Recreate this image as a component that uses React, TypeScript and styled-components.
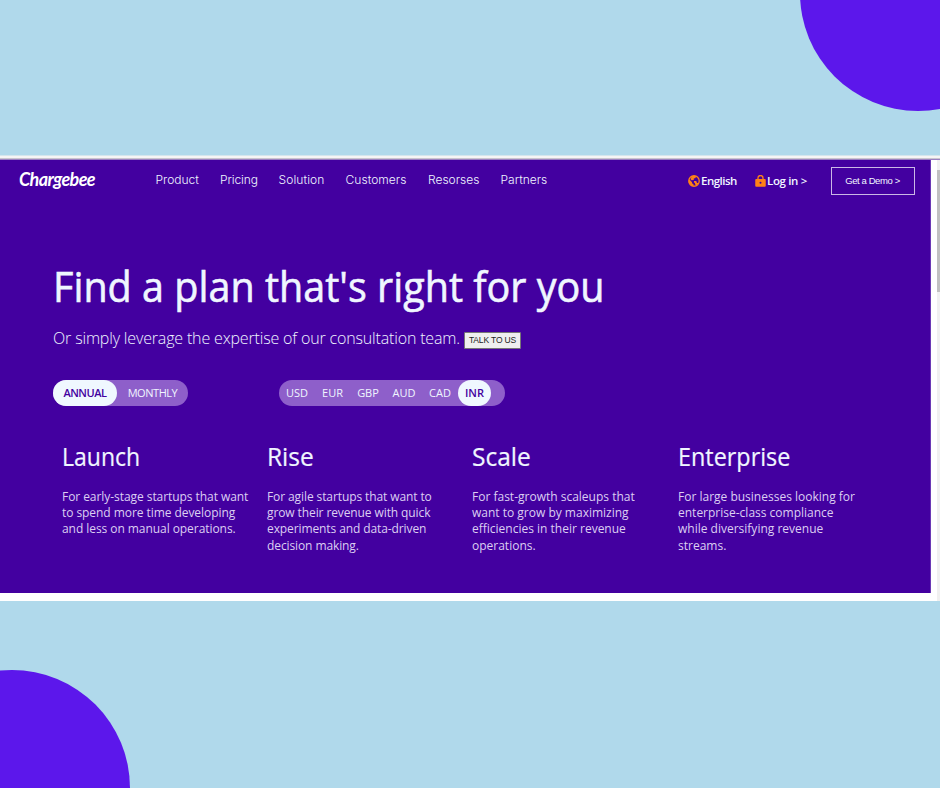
import React from "react";
import styled, { createGlobalStyle } from "styled-components";

const Global = createGlobalStyle`
  * { box-sizing: border-box; }
  body { margin: 0; font-family: "Open Sans", "Noto Sans", sans-serif; }
`;

const Stage = styled.div`
  position: relative;
  width: 940px;
  height: 788px;
  padding-top: 155px;
  overflow: hidden;
  background: #b0d9eb;
`;

const Disc = styled.div<{ $x: number; $y: number }>`
  position: absolute;
  left: ${(p) => p.$x}px;
  top: ${(p) => p.$y}px;
  width: 236px;
  height: 236px;
  border-radius: 50%;
  background: #5c17eb;
`;

const Browser = styled.div`
  height: 445.5px;
  display: flex;
  flex-direction: column;
  background: #fff;
`;

const TopEdge = styled.div`
  height: 5px;
  flex: none;
  background: linear-gradient(#d4e6ee 0 1px, #f5f5f5 1px 3px, #c9c5cf 3px 4px, #9a80c2 4px 5px);
`;

const Viewport = styled.div`
  flex: 1;
  display: flex;
`;

const Page = styled.div`
  width: 931px;
  height: 433px;
  background: #4300a0;
  border-right: 1px solid #6a38b4;
  color: #f0f6ff;
`;

const Track = styled.div`
  width: 3px;
  margin-left: auto;
  padding-top: 10px;
  background: #f0f0f0;
`;

const Thumb = styled.div`
  height: 122px;
  background: #c1c1c1;
`;

const Header = styled.header`
  height: 42px;
  display: flex;
  align-items: center;
  padding-left: 19px;
`;

const Logo = styled.a`
  width: 136.5px;
  font: italic 700 18px/20px Lato, sans-serif;
  letter-spacing: -0.6px;
  padding-bottom: 5px;
  color: #fff;
`;

const Nav = styled.nav`
  width: 532px;
  display: flex;
  gap: 21.5px;
  padding-bottom: 3px;
`;

const NavLink = styled.a<{ $w: number; $ls: number }>`
  width: ${(p) => p.$w}px;
  white-space: nowrap;
  font: 300 12px/16px Inter, sans-serif;
  letter-spacing: ${(p) => p.$ls}px;
`;

const Tool = styled.a<{ $w: number; $ls: number }>`
  width: ${(p) => p.$w}px;
  display: flex;
  align-items: center;
  gap: 1.5px;
  white-space: nowrap;
  font-size: 11.5px;
  line-height: 16px;
  font-weight: 600;
  letter-spacing: ${(p) => p.$ls}px;
  svg { flex: none; }
`;

const Demo = styled.a`
  width: 84px;
  height: 28px;
  margin-bottom: 1px;
  display: flex;
  align-items: center;
  justify-content: center;
  border: 1px solid #cbb8e6;
  white-space: nowrap;
  font: 400 9.5px/12px "Liberation Sans", sans-serif;
  letter-spacing: -0.4px;
`;

const Hero = styled.section`
  padding: 56px 0 0 53px;
`;

const Title = styled.h1`
  margin: 0;
  font-size: 42.5px;
  line-height: 56px;
  font-weight: 400;
  white-space: nowrap;
  -webkit-text-stroke: 0.6px #f0f6ff;
  transform: scaleX(0.93);
  transform-origin: left;
`;

const Lead = styled.div`
  height: 24px;
  margin-top: 12px;
  display: flex;
  align-items: center;
`;

const LeadText = styled.p`
  width: 411px;
  margin: 0;
  font-size: 16px;
  line-height: 24px;
  font-weight: 300;
  letter-spacing: -0.16px;
  white-space: nowrap;
`;

const Talk = styled.button`
  width: 57px;
  height: 17px;
  margin-top: 4px;
  padding: 0;
  border: 1px solid #777;
  border-radius: 1px;
  background: #efefef;
  color: #222;
  white-space: nowrap;
  font: 400 8.5px/14px "Liberation Sans", sans-serif;
  letter-spacing: -0.15px;
`;

const Switches = styled.div`
  display: flex;
  margin-top: 30px;
  gap: 91px;
`;

const Pill = styled.div<{ $w: number }>`
  width: ${(p) => p.$w}px;
  height: 25.5px;
  display: flex;
  border-radius: 13px;
  background: #8e5fca;
`;

const Option = styled.span<{ $w: number; $on?: boolean }>`
  width: ${(p) => p.$w}px;
  display: flex;
  align-items: center;
  justify-content: center;
  border-radius: 13px;
  background: ${(p) => (p.$on ? "#f0f8ff" : "transparent")};
  color: ${(p) => (p.$on ? "#4300a0" : "#f0f6ff")};
  font-size: 11px;
  line-height: 15px;
  font-weight: ${(p) => (p.$on ? 600 : 500)};
  letter-spacing: ${(p) => (p.$w > 60 ? -0.45 : 0)}px;
  padding-bottom: 1.5px;
`;

const Plans = styled.section`
  display: grid;
  grid-template-columns: 205px 205px 206px 210px;
  padding: 32px 0 0 9px;
`;

const PlanName = styled.h2<{ $sx: number }>`
  margin: 0 0 15.5px;
  font-size: 25px;
  line-height: 36px;
  font-weight: 400;
  -webkit-text-stroke: 0.2px #f0f6ff;
  transform: scaleX(${(p) => p.$sx});
  transform-origin: left;
`;

const PlanText = styled.p<{ $ls: number }>`
  margin: 0;
  font-size: 12px;
  line-height: 16.2px;
  font-weight: 400;
  color: #dccff2;
  letter-spacing: ${(p) => p.$ls}px;
  white-space: pre;
`;

const Globe = () => (
  <svg width="12" height="12" viewBox="0 0 24 24">
    <circle cx="12" cy="12" r="10.500" fill="none" stroke="#ff8216" strokeWidth="2.600" />
    <path d="M2 8l6 6.500v2l3 2V22H7L1.500 16zM8 2h8l-1 4-3.500 1v3L7 10.500 5 8zM12 12h4.500l1.500 4h3l-3 4.500-4-1.500v-3l-2-1z" fill="#ff8216" />
  </svg>
);

const Lock = () => (
  <svg width="11" height="12" viewBox="0 0 22 24">
    <path d="M6 10V6a5 5 0 0 1 10 0v4" fill="none" stroke="#ff8216" strokeWidth="2.600" />
    <rect x="0.500" y="8" width="21" height="15.500" rx="2" fill="#ff8216" />
    <circle cx="11" cy="15.500" r="2" fill="#4300a0" />
  </svg>
);

const links = [
  { label: "Product", w: 43, ls: 0 },
  { label: "Pricing", w: 37, ls: -0.1 },
  { label: "Solution", w: 45.5, ls: 0.1 },
  { label: "Customers", w: 61, ls: 0.05 },
  { label: "Resorses", w: 51, ls: 0 },
  { label: "Partners", w: 47, ls: 0 },
];

const currencies = [
  { label: "USD", w: 36 },
  { label: "EUR", w: 35 },
  { label: "GBP", w: 36 },
  { label: "AUD", w: 36 },
  { label: "CAD", w: 36 },
  { label: "INR", w: 33 },
];

const plans = [
  { name: "Launch", sx: 0.92, ls: -0.06, text: "For early-stage startups that want\nto spend more time developing\nand less on manual operations." },
  { name: "Rise", sx: 0.98, ls: -0.1, text: "For agile startups that want to\ngrow their revenue with quick\nexperiments and data-driven\ndecision making." },
  { name: "Scale", sx: 0.98, ls: 0, text: "For fast-growth scaleups that\nwant to grow by maximizing\nefficiencies in their revenue\noperations." },
  { name: "Enterprise", sx: 0.935, ls: 0, text: "For large businesses looking for\nenterprise-class compliance\nwhile diversifying revenue\nstreams." },
];

export default function App() {
  return (
    <Stage>
      <Global />
      <Disc $x={800} $y={-125} />
      <Disc $x={-106} $y={670} />
      <Browser>
        <TopEdge />
        <Viewport>
          <Page>
            <Header>
              <Logo>Chargebee</Logo>
              <Nav>
                {links.map((l) => (
                  <NavLink key={l.label} $w={l.w} $ls={l.ls}>{l.label}</NavLink>
                ))}
              </Nav>
              <Tool $w={67} $ls={-0.5}><Globe />English</Tool>
              <Tool $w={76} $ls={-0.35}><Lock />Log in &gt;</Tool>
              <Demo>Get a Demo &gt;</Demo>
            </Header>
            <Hero>
              <Title>Find a plan that's right for you</Title>
              <Lead>
                <LeadText>Or simply leverage the expertise of our consultation team.</LeadText>
                <Talk>TALK TO US</Talk>
              </Lead>
              <Switches>
                <Pill $w={135}>
                  <Option $w={64} $on>ANNUAL</Option>
                  <Option $w={71}>MONTHLY</Option>
                </Pill>
                <Pill $w={226}>
                  {currencies.map((c) => (
                    <Option key={c.label} $w={c.w} $on={c.label === "INR"}>{c.label}</Option>
                  ))}
                </Pill>
              </Switches>
              <Plans>
                {plans.map((p) => (
                  <article key={p.name}>
                    <PlanName $sx={p.sx}>{p.name}</PlanName>
                    <PlanText $ls={p.ls}>{p.text}</PlanText>
                  </article>
                ))}
              </Plans>
            </Hero>
          </Page>
          <Track><Thumb /></Track>
        </Viewport>
      </Browser>
    </Stage>
  );
}
